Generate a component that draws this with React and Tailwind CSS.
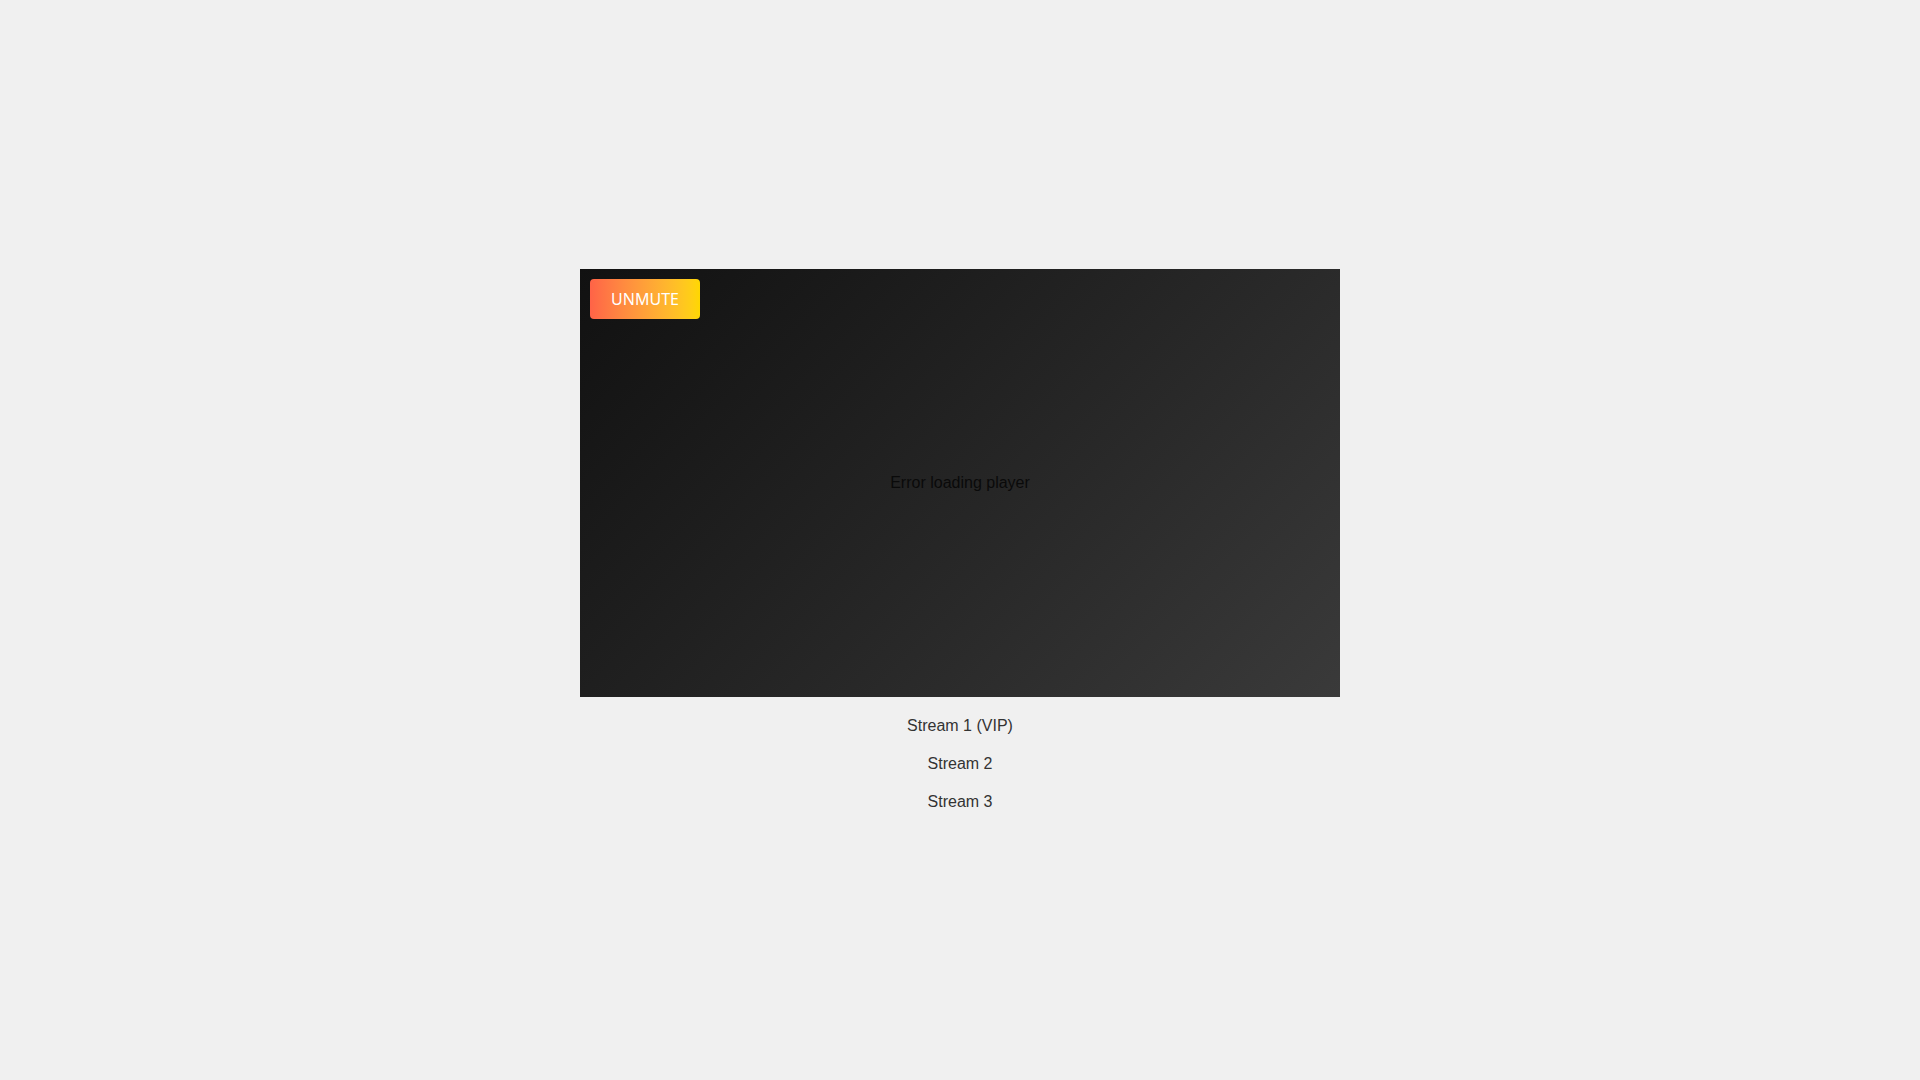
export default function App() {
  return (
    <div className="min-h-screen w-full bg-[#f0f0f0] flex flex-col items-center justify-center font-['Liberation_Sans',Arial,sans-serif]">
      <div className="relative w-[760px] h-[428px] bg-linear-135 from-[#111111] to-[#3a3a3a] flex items-center justify-center">
        <span className="text-[16px] leading-5 text-[#0a0a0a]">Error loading player</span>
        <button className="absolute top-[10px] left-[10px] w-[110px] h-10 rounded-[4px] bg-linear-to-r from-[#ff6347] to-[#ffd700] text-white text-[16px] font-normal font-['Noto_Sans',sans-serif] flex items-center justify-center">
          UNMUTE
        </button>
      </div>
      <div className="mt-[19px] flex flex-col items-center gap-[18px] text-[16px] leading-5 text-[#333333]">
        <div>Stream 1 (VIP)</div>
        <div>Stream 2</div>
        <div>Stream 3</div>
      </div>
    </div>
  );
}
